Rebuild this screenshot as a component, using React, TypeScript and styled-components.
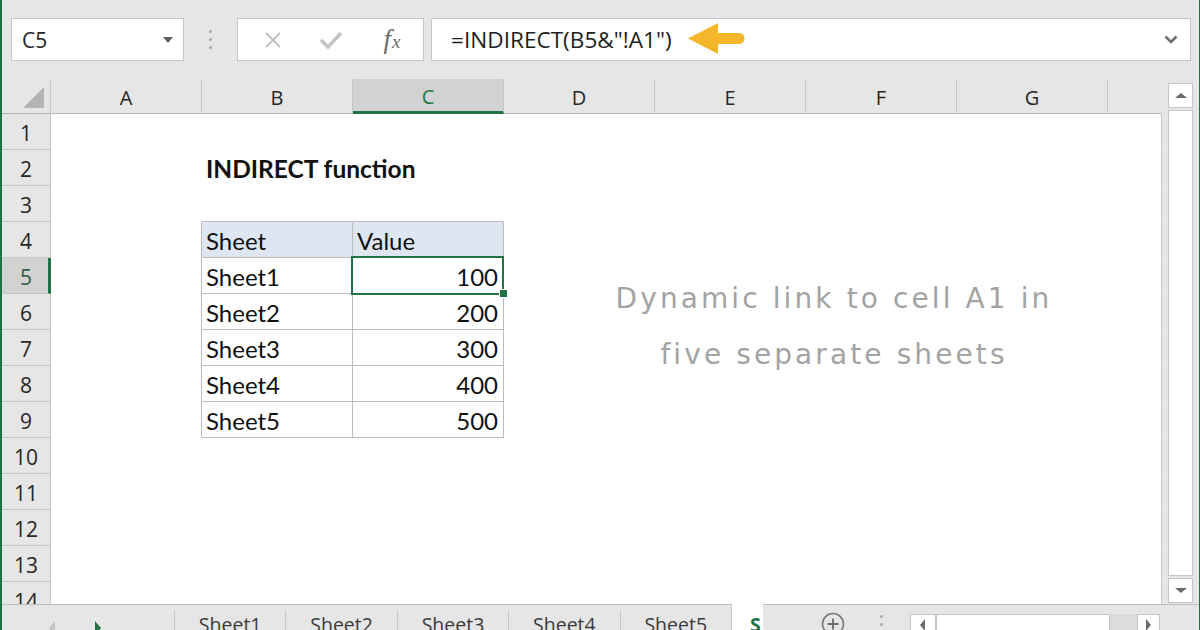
import React from 'react';
import styled, { createGlobalStyle, css } from 'styled-components';

const GREEN = '#217346';
const LINE = '#c6c6c6';
const PANEL = '#e6e6e6';
const TABLE_LINE = '#bcbcbc';

const GlobalStyle = createGlobalStyle`
  html, body {
    margin: 0;
    padding: 0;
    background: ${PANEL};
  }
  body {
    font-family: "Open Sans", "Liberation Sans", sans-serif;
  }
`;

const Window = styled.div`
  width: 1200px;
  height: 630px;
  box-sizing: border-box;
  border-left: 2px solid ${GREEN};
  border-right: 1px solid ${GREEN};
  background: ${PANEL};
  display: flex;
  flex-direction: column;
  overflow: hidden;
`;

/* ---------- formula bar ---------- */

const FormulaBar = styled.div`
  height: 79px;
  flex: none;
  box-sizing: border-box;
  padding: 18px 8px 0 9px;
  display: flex;
  align-items: flex-start;
`;

const Box = styled.div`
  height: 43px;
  box-sizing: border-box;
  border: 1px solid ${LINE};
  background: #fff;
  display: flex;
  align-items: center;
`;

const NameBox = styled(Box)`
  width: 173px;
  padding: 0 10px 0 10px;
  justify-content: space-between;
  font-size: 21px;
  color: #262626;
`;

const DropTriangle = styled.span`
  width: 0;
  height: 0;
  border-left: 5px solid transparent;
  border-right: 5px solid transparent;
  border-top: 6px solid #5f5f5f;
`;

const Grip = styled.div<{ $width: number; $height: number; $gap: number }>`
  width: ${(p) => p.$width}px;
  height: ${(p) => p.$height}px;
  flex: none;
  display: flex;
  flex-direction: column;
  align-items: center;
  justify-content: center;
  gap: ${(p) => p.$gap}px;
`;

const Dot = styled.span`
  width: 3px;
  height: 3px;
  border-radius: 50%;
  background: #a9a9a9;
`;

const IconBox = styled(Box)`
  width: 187px;
  padding-left: 6px;
`;

const IconSlot = styled.div`
  width: 58px;
  display: flex;
  justify-content: center;
  align-items: center;
`;

const Fx = styled.span`
  font-family: "Liberation Serif", serif;
  font-style: italic;
  font-size: 27px;
  color: #6b6b6b;
  line-height: 1;
  margin-left: 6px;

  small {
    font-size: 19px;
    margin-left: 1px;
  }
`;

const FormulaBox = styled(Box)`
  flex: 1;
  margin-left: 7px;
  padding: 0 12px 0 19px;
`;

const FormulaText = styled.span`
  font-size: 22.6px;
  color: #1e1e1e;
`;

const Arrow = styled.svg`
  flex: none;
  margin: -3px 0 0 16px;
`;

const Spacer = styled.div`
  flex: 1;
`;

/* ---------- sheet ---------- */

const Main = styled.div`
  height: 525px;
  flex: none;
  display: flex;
`;

const Sheet = styled.div`
  width: 1160px;
  display: grid;
  overflow: hidden;
`;

const gridTemplate = css`
  grid-area: 1 / 1;
  display: grid;
  grid-template-columns: 49px repeat(7, 151px) 1fr;
  grid-template-rows: 35px repeat(14, 36px);
`;

const CellGrid = styled.div`
  ${gridTemplate};
  background: #fff;
`;

const OverlayGrid = styled.div`
  ${gridTemplate};
  pointer-events: none;
`;

const Corner = styled.div`
  box-sizing: border-box;
  background: ${PANEL};
  border-right: 1px solid ${LINE};
  border-bottom: 1px solid #b5b5b5;
  display: flex;
  align-items: flex-end;
  justify-content: flex-end;
  padding: 0 6px 5px 0;
`;

const CornerMark = styled.span`
  width: 0;
  height: 0;
  border-style: solid;
  border-width: 0 0 21px 21px;
  border-color: transparent transparent #b4b4b4 transparent;
`;

const ColHead = styled.div<{ $selected?: boolean; $plain?: boolean }>`
  box-sizing: border-box;
  display: flex;
  align-items: center;
  justify-content: center;
  padding-top: 2px;
  background: ${(p) => (p.$selected ? '#d2d2d2' : PANEL)};
  border-right: 1px solid ${(p) => (p.$plain ? 'transparent' : LINE)};
  border-bottom: ${(p) => (p.$selected ? `3px solid ${GREEN}` : '1px solid #b5b5b5')};
  font-size: 20px;
  color: ${(p) => (p.$selected ? GREEN : '#262626')};
`;

const RowHead = styled.div<{ $selected?: boolean }>`
  box-sizing: border-box;
  display: flex;
  align-items: center;
  justify-content: center;
  padding-top: 2px;
  background: ${(p) => (p.$selected ? '#d2d2d2' : PANEL)};
  border-bottom: 1px solid ${LINE};
  border-right: ${(p) => (p.$selected ? `3px solid ${GREEN}` : `1px solid ${LINE}`)};
  padding-left: ${(p) => (p.$selected ? 2 : 0)}px;
  font-size: 21px;
  color: ${(p) => (p.$selected ? '#2f5d45' : '#262626')};
`;

type CellProps = {
  $right?: string;
  $bottom?: string;
  $fill?: string;
  $alignEnd?: boolean;
  $bold?: boolean;
  $selected?: boolean;
};

const Cell = styled.div<CellProps>`
  position: relative;
  box-sizing: border-box;
  display: flex;
  align-items: center;
  justify-content: ${(p) => (p.$alignEnd ? 'flex-end' : 'flex-start')};
  padding: 2px 5px 0 4px;
  border-right: 1px solid ${(p) => p.$right || 'transparent'};
  border-bottom: 1px solid ${(p) => p.$bottom || 'transparent'};
  background: ${(p) => p.$fill || 'transparent'};
  font-family: Lato, "Liberation Sans", sans-serif;
  font-size: ${(p) => (p.$bold ? 24.5 : 24)}px;
  font-weight: ${(p) => (p.$bold ? 700 : 400)};
  color: #111;
  white-space: nowrap;

  ${(p) => p.$selected
    && css`
      z-index: 2;
      &::after {
        content: '';
        position: absolute;
        top: -2px;
        left: -2px;
        right: -1px;
        bottom: -2px;
        border: 2px solid ${GREEN};
      }
      &::before {
        content: '';
        position: absolute;
        right: -5px;
        bottom: -5px;
        width: 7px;
        height: 7px;
        background: ${GREEN};
        border: 1px solid #fff;
        z-index: 3;
      }
    `}
`;

const Note = styled.div`
  grid-column: 5 / 9;
  grid-row: 6 / 10;
  display: flex;
  flex-direction: column;
  align-items: center;
  justify-content: center;
  padding: 0 0 6px 56px;
  font-family: "DejaVu Sans", sans-serif;
  font-size: 28px;
  letter-spacing: 3.1px;
  line-height: 56px;
  color: #a3a3a3;
  white-space: nowrap;
`;

/* ---------- scrollbars ---------- */

const VScroll = styled.div`
  flex: 1;
  box-sizing: border-box;
  padding: 4px 6px 1px 6px;
  display: flex;
  flex-direction: column;
  gap: 2px;
`;

const ScrollButton = styled.div<{ $w?: number; $h?: number }>`
  flex: none;
  width: ${(p) => (p.$w ? `${p.$w}px` : 'auto')};
  height: ${(p) => (p.$h ? `${p.$h}px` : 'auto')};
  box-sizing: border-box;
  background: #fff;
  border: 1px solid ${LINE};
  display: flex;
  align-items: center;
  justify-content: center;
`;

const Thumb = styled.div`
  flex: 1;
  box-sizing: border-box;
  background: #fff;
  border: 1px solid ${LINE};
`;

const Tri = styled.span<{ $dir: 'up' | 'down' | 'left' | 'right'; $color?: string; $size?: number }>`
  width: 0;
  height: 0;
  ${(p) => {
    const s = p.$size || 5;
    const c = p.$color || '#6a6a6a';
    switch (p.$dir) {
      case 'up':
        return css`border-left: ${s + 1}px solid transparent; border-right: ${s + 1}px solid transparent; border-bottom: ${s}px solid ${c};`;
      case 'down':
        return css`border-left: ${s + 1}px solid transparent; border-right: ${s + 1}px solid transparent; border-top: ${s}px solid ${c};`;
      case 'left':
        return css`border-top: ${s + 1}px solid transparent; border-bottom: ${s + 1}px solid transparent; border-right: ${s}px solid ${c};`;
      default:
        return css`border-top: ${s + 1}px solid transparent; border-bottom: ${s + 1}px solid transparent; border-left: ${s}px solid ${c};`;
    }
  }}
`;

/* ---------- sheet tabs ---------- */

const TabBar = styled.div`
  flex: 1;
  display: flex;
  align-items: flex-start;
  border-top: 1px solid #bdbdbd;
  font-size: 19.5px;
  color: #3a3a3a;
`;

const TabNav = styled.div`
  width: 172px;
  flex: none;
  display: flex;
  align-items: center;
  gap: 40px;
  padding: 16px 0 0 47px;
  box-sizing: border-box;
`;

const Tab = styled.div`
  flex: 0 0 111.4px;
  box-sizing: border-box;
  height: 30px;
  margin-top: 5px;
  padding-top: 3px;
  border-left: 1px solid ${LINE};
  text-align: center;
  line-height: 24px;
`;

const ActiveTab = styled.div`
  flex: 0 0 32px;
  box-sizing: border-box;
  height: 32px;
  margin-top: -1px;
  background: #fff;
  border-left: 1px solid ${LINE};
  padding: 9px 0 0 18px;
  line-height: 24px;
  overflow: hidden;
  color: ${GREEN};
  font-weight: 700;
`;

const TabTools = styled.div`
  flex: 1;
  display: flex;
  align-items: flex-start;
  padding-top: 7px;
`;

const AddSheet = styled.svg`
  margin-left: 58px;
  flex: none;
`;

const GripSlot = styled.div`
  margin: 2px 0 0 22px;
`;

const HScroll = styled.div`
  margin: 2px 0 0 13px;
  width: 250px;
  height: 22px;
  display: flex;
`;

const HTrack = styled.div`
  width: 27px;
  background: #dcdcdc;
`;

const sheetNames = ['Sheet1', 'Sheet2', 'Sheet3', 'Sheet4', 'Sheet5'];
const COLS = ['A', 'B', 'C', 'D', 'E', 'F', 'G'];
const ROWS = Array.from({ length: 14 }, (_, i) => i + 1);

const values: Record<string, string> = {
  B2: 'INDIRECT function',
  B4: 'Sheet',
  C4: 'Value',
};
sheetNames.forEach((name, i) => {
  values[`B${i + 5}`] = name;
  values[`C${i + 5}`] = String((i + 1) * 100);
});

const inTable = (row: number) => row >= 4 && row <= 9;

function cellProps(col: string, row: number): CellProps {
  const tableCol = col === 'B' || col === 'C';
  return {
    $right: inTable(row) && (col === 'A' || tableCol) ? TABLE_LINE : undefined,
    $bottom: tableCol && row >= 3 && row <= 9 ? TABLE_LINE : undefined,
    $fill: tableCol && row === 4 ? '#dde6f1' : undefined,
    $alignEnd: col === 'C' && row >= 5,
    $bold: col === 'B' && row === 2,
    $selected: col === 'C' && row === 5,
  };
}

const Dots: React.FC<{ width: number; height: number; gap: number }> = ({ width, height, gap }) => (
  <Grip $width={width} $height={height} $gap={gap}>
    <Dot />
    <Dot />
    <Dot />
  </Grip>
);

const App: React.FC = () => (
  <Window>
    <GlobalStyle />
    <FormulaBar>
      <NameBox>
        <span>C5</span>
        <DropTriangle />
      </NameBox>
      <Dots width={53} height={43} gap={5} />
      <IconBox>
        <IconSlot>
          <svg width="18" height="18" viewBox="0 0 18 18">
            <path d="M2 2 L16 16 M16 2 L2 16" stroke="#c2c2c2" strokeWidth="1.8" fill="none" />
          </svg>
        </IconSlot>
        <IconSlot>
          <svg width="24" height="20" viewBox="0 0 24 20">
            <path d="M2 10 L9 17 L22 3" stroke="#c4c4c4" strokeWidth="3.6" fill="none" />
          </svg>
        </IconSlot>
        <IconSlot>
          <Fx>
            f
            <small>x</small>
          </Fx>
        </IconSlot>
      </IconBox>
      <FormulaBox>
        <FormulaText>=INDIRECT(B5&amp;&quot;!A1&quot;)</FormulaText>
        <Arrow width="57" height="31" viewBox="0 0 57 31">
          <path d="M0 15.5 L30 0 L30 10 H51 A5.5 5.5 0 0 1 51 21 H30 V31 Z" fill="#f4b62a" />
        </Arrow>
        <Spacer />
        <svg width="14" height="9" viewBox="0 0 14 9">
          <path d="M1.5 1.5 L7 7 L12.5 1.5" stroke="#6e6e6e" strokeWidth="2.6" fill="none" />
        </svg>
      </FormulaBox>
    </FormulaBar>

    <Main>
      <Sheet>
        <CellGrid>
          <Corner>
            <CornerMark />
          </Corner>
          {COLS.map((c) => (
            <ColHead key={c} $selected={c === 'C'}>
              {c}
            </ColHead>
          ))}
          <ColHead $plain />
          {ROWS.map((r) => (
            <React.Fragment key={r}>
              <RowHead $selected={r === 5}>{r}</RowHead>
              {COLS.map((c) => (
                <Cell key={c} {...cellProps(c, r)}>
                  {values[`${c}${r}`]}
                </Cell>
              ))}
              <Cell $right={LINE} />
            </React.Fragment>
          ))}
        </CellGrid>
        <OverlayGrid>
          <Note>
            <span>Dynamic link to cell A1 in</span>
            <span>five separate sheets</span>
          </Note>
        </OverlayGrid>
      </Sheet>
      <VScroll>
        <ScrollButton $h={25}>
          <Tri $dir="up" />
        </ScrollButton>
        <Thumb />
        <ScrollButton $h={25}>
          <Tri $dir="down" />
        </ScrollButton>
      </VScroll>
    </Main>

    <TabBar>
      <TabNav>
        <Tri $dir="left" $color="#c4c4c4" $size={6} />
        <Tri $dir="right" $color={GREEN} $size={6} />
      </TabNav>
      {sheetNames.map((s) => (
        <Tab key={s}>{s}</Tab>
      ))}
      <ActiveTab>S</ActiveTab>
      <TabTools>
        <AddSheet width="24" height="24" viewBox="0 0 24 24">
          <circle cx="12" cy="12" r="10.5" stroke="#7a7a7a" strokeWidth="1.6" fill="none" />
          <path d="M12 6.5 V17.5 M6.5 12 H17.5" stroke="#6a6a6a" strokeWidth="1.8" />
        </AddSheet>
        <GripSlot>
          <Dots width={30} height={20} gap={5} />
        </GripSlot>
        <HScroll>
          <ScrollButton $w={26}>
            <Tri $dir="left" $size={5} />
          </ScrollButton>
          <Thumb />
          <HTrack />
          <ScrollButton $w={23}>
            <Tri $dir="right" $size={5} />
          </ScrollButton>
        </HScroll>
      </TabTools>
    </TabBar>
  </Window>
);

export default App;
